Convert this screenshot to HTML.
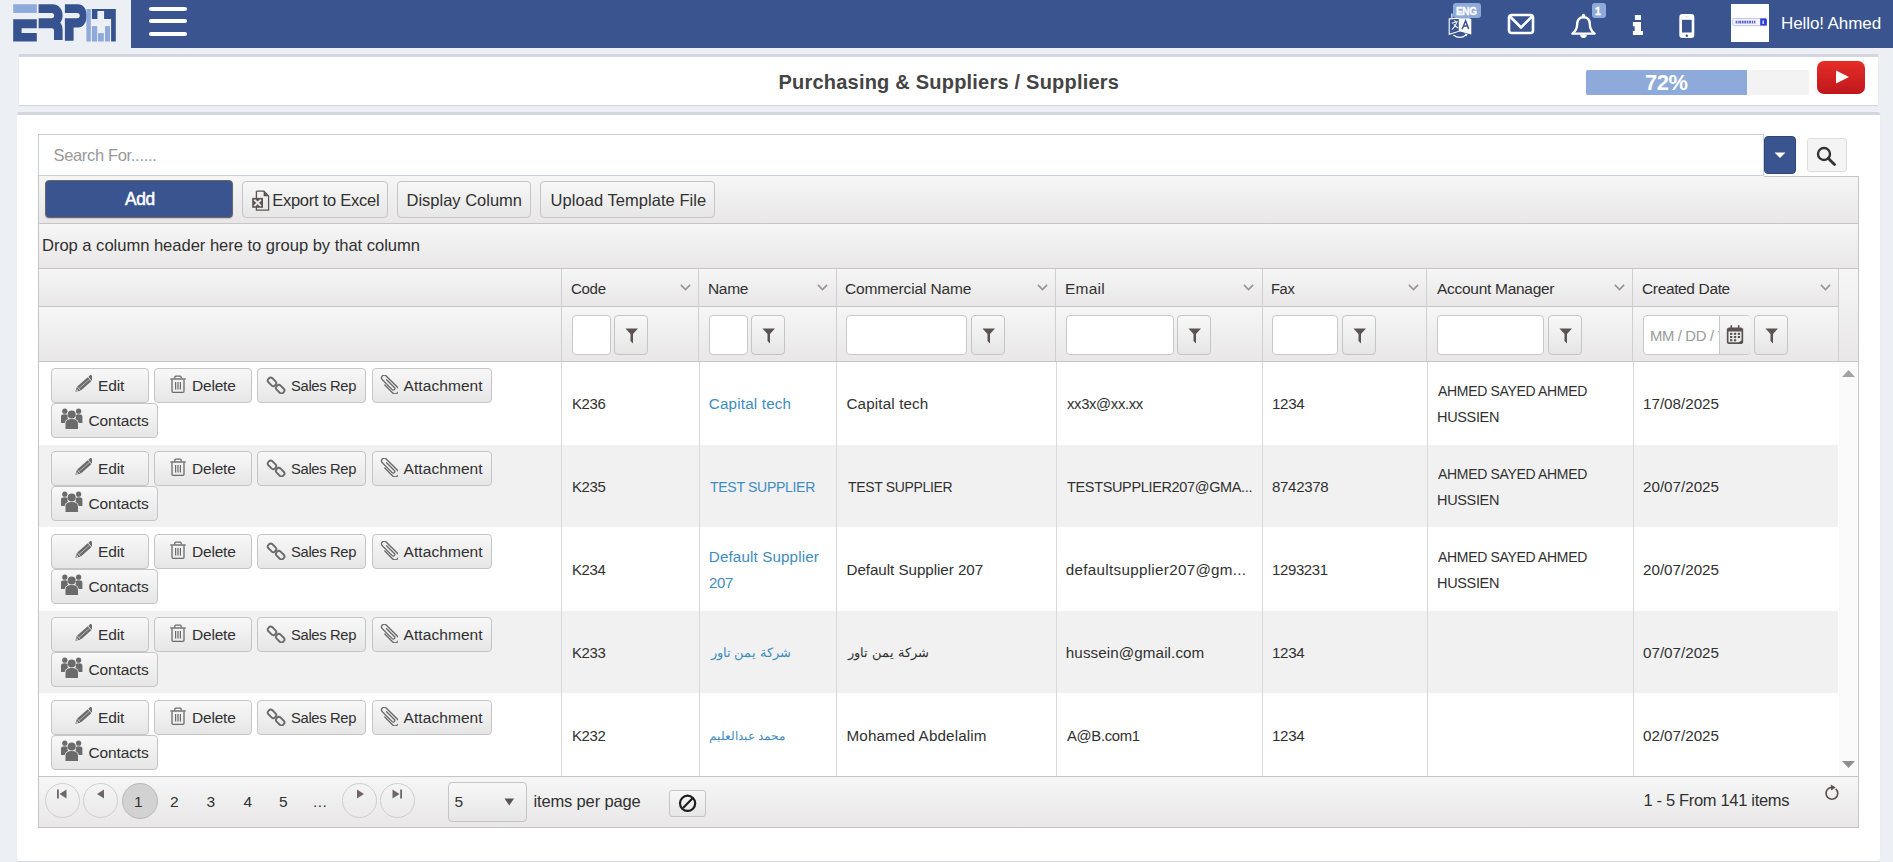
<!DOCTYPE html>
<html><head><meta charset="utf-8"><title>Suppliers</title>
<style>
html,body{margin:0;padding:0;width:1893px;height:862px;overflow:hidden;background:#ecf0f5}
body{position:relative;font-family:"Liberation Sans",sans-serif}
body>div{position:absolute}
.t{white-space:nowrap}
</style></head><body>
<div style="left:0px;top:0px;width:1893px;height:862px;background:#ecf0f5"></div>
<div style="left:131px;top:0px;width:1762px;height:48px;background:#39548f"></div>
<svg style="position:absolute;left:0px;top:0px" width="131" height="48" viewBox="0 0 131 48">
<rect x="13.2" y="4.2" width="23.6" height="8.7" fill="#8eaadb"/>
<path d="M13.2 19.2H36.8V28.2H21.6V33.1H36.8V41.5H13.2Z" fill="#36538f"/>
<path d="M38.6 4.2H52.5C58.5 4.2 62.6 9 62.6 15C62.6 18.8 61.5 21.5 60.2 22.8C61.8 24.5 62.6 27 62.6 30V40H54V30.5C54 29 53 28.2 51.5 28.2H38.6V18.3H51.5C53.2 18.3 54.2 17.2 54.2 15.6C54.2 14 53.2 12.9 51.5 12.9H38.6Z" fill="#36538f"/>
<path d="M64.9 4.2H78C83 4.2 86.7 8.5 86.7 15.8C86.7 23 83 27.5 78 27.5H73.6V40.7H64.9V18.3H77C78.8 18.3 79.8 17.2 79.8 15.6C79.8 14 78.8 12.9 77 12.9H64.9Z" fill="#36538f"/>
<rect x="86.4" y="9" width="4.4" height="32.5" fill="#8eaadb"/>
<path d="M91.9 9H115.8V41.5H111.1V18.9H104.1V11H97.4V18.9H91.9Z" fill="#36538f"/>
<rect x="91.9" y="26.1" width="5.3" height="15.4" fill="#8eaadb"/>
<rect x="98" y="33.1" width="5.8" height="8.4" fill="#8eaadb"/>
<rect x="105" y="26.1" width="5" height="15.4" fill="#8eaadb"/>
</svg>
<div style="left:149px;top:7px;width:38px;height:4px;background:#fff;border-radius:2px"></div>
<div style="left:149px;top:19px;width:38px;height:4px;background:#fff;border-radius:2px"></div>
<div style="left:149px;top:32px;width:38px;height:4px;background:#fff;border-radius:2px"></div>
<svg style="position:absolute;left:1444px;top:12px" width="32" height="28" viewBox="0 0 32 28">
<path d="M5.2 6.9 L15.3 6.3 V19.2 L5.2 22.2Z" fill="none" stroke="#ffffff" stroke-width="1.1"/>
<path d="M7.9 1.5 V6" stroke="#ffffff" stroke-width="1.2"/>
<path d="M15.3 6.2 H25.5 L27.3 7.3 V22.4 L15.3 19.2Z" fill="#ffffff"/>
<path d="M18.1 17.2 L21.6 8.7 L24.7 17.1 M19.5 13.9 H23.4" stroke="#39548f" stroke-width="1.5" fill="none"/>
<path d="M7.8 11.2 L13.6 9.6 M10.6 8.2 L11.6 10.2 M12.9 10.4 Q11.2 15 7.8 17.6 M9.9 12.4 Q12 14.8 14.2 16" stroke="#ffffff" stroke-width="1.05" fill="none"/>
<path d="M9.4 22.9 Q15.9 27.8 22 23" stroke="#ffffff" stroke-width="1.2" fill="none"/>
<path d="M20.6 21.6 L23.6 22.1 L22.3 24.6Z" fill="#ffffff"/>
</svg>
<div style="left:1453px;top:3px;width:28px;height:15px;background:#8eaadb;border-radius:3px"></div>
<div class="t" style="left:1456.06px;top:6.13px;font-size:10.6px;line-height:10.6px;color:#fff;font-weight:700;letter-spacing:-0.350px;transform:scaleX(0.9390);transform-origin:0 0;-webkit-text-stroke:0.35px #fff">ENG</div>
<svg style="position:absolute;left:1507px;top:13px" width="28" height="22" viewBox="0 0 28 22"><rect x="2" y="2" width="24" height="18" rx="2.5" fill="none" stroke="#ffffff" stroke-width="2.6"/><path d="M3 3.5 L14 14.5 L25 3.5" fill="none" stroke="#ffffff" stroke-width="2.6" stroke-linejoin="round"/></svg>
<svg style="position:absolute;left:1568px;top:10px" width="32" height="31" viewBox="0 0 32 31"><path d="M15.5 7.2 C19.5 7.2 21.8 10 21.8 14 C21.8 18 22.5 20.5 26.6 23.6 H4.4 C8.5 20.5 9.2 18 9.2 14 C9.2 10 11.5 7.2 15.5 7.2Z" fill="none" stroke="#ffffff" stroke-width="2.4" stroke-linejoin="round"/><circle cx="15.5" cy="5.4" r="1.7" fill="#ffffff"/><path d="M12.1 24.6 A3.4 3.4 0 0 0 18.9 24.6Z" fill="#ffffff"/></svg>
<div style="left:1592px;top:3px;width:14px;height:15px;background:#8eaadb;border-radius:3px"></div>
<div class="t" style="left:1595.00px;top:6.21px;font-size:10.5px;line-height:10.5px;color:#fff;font-weight:700;letter-spacing:0.000px;-webkit-text-stroke:0.35px #fff">1</div>
<svg style="position:absolute;left:1632px;top:14px" width="12" height="22" viewBox="0 0 12 22"><rect x="2.9" y="0.9" width="6.1" height="5" rx="0.6" fill="#ffffff"/><path d="M0.9 7.9 H9 V17 H11 V20.9 H0.9 V17 H2.7 V12.2 H0.9Z" fill="#ffffff"/></svg>
<svg style="position:absolute;left:1678px;top:13px" width="18" height="26" viewBox="0 0 18 26"><rect x="1.3" y="1.1" width="15" height="24" rx="3" fill="#ffffff"/><rect x="4" y="6.8" width="9.7" height="12.7" fill="#39548f"/><circle cx="8.8" cy="22.7" r="1.2" fill="#39548f"/><rect x="7" y="3.5" width="3.6" height="0.8" fill="#c9d2e6"/></svg>
<div style="left:1731px;top:4px;width:38px;height:38px;background:#fff"></div>
<svg style="position:absolute;left:1732px;top:17px" width="36" height="10" viewBox="0 0 36 10"><rect x="0.6" y="1.4" width="34" height="7.3" rx="1.6" fill="#f4f4ff" stroke="#b8c0ec" stroke-width="0.9"/><path d="M28.2 1.6 H33.5 Q34.8 1.6 34.8 3 V8.6 H28.2Z" fill="#2b3bd6"/><g fill="#5660cf"><rect x="3.6" y="3.7" width="1.3" height="2.8"/><rect x="5.6" y="3.7" width="1.1" height="2.8"/><rect x="7.3" y="3.7" width="1.8" height="2.8"/><rect x="9.8" y="3.7" width="1.8" height="2.8"/><rect x="12.3" y="3.7" width="1.8" height="2.8"/><rect x="14.8" y="3.7" width="1.6" height="2.8"/><rect x="17.2" y="3.7" width="1.8" height="2.8"/><rect x="19.8" y="3.7" width="1.4" height="2.8"/><rect x="22" y="3.7" width="1.3" height="2.8"/></g><rect x="30.4" y="3.4" width="1.6" height="3.6" fill="#c8d0f5"/></svg>
<div class="t" style="left:1781.00px;top:14.91px;font-size:17px;line-height:17px;color:#fff;font-weight:400;letter-spacing:-0.091px;">Hello! Ahmed</div>
<div style="left:19px;top:54px;width:1859px;height:48px;background:#fff;border-top:3px solid #d2d6de;box-shadow:0 1px 1px rgba(0,0,0,0.1)"></div>
<div class="t" style="left:778.50px;top:71.87px;font-size:20px;line-height:20px;color:#444;font-weight:700;letter-spacing:0.212px;">Purchasing &amp; Suppliers / Suppliers</div>
<div style="left:1586px;top:70px;width:223px;height:25px;background:#f3f3f3"></div>
<div style="left:1586px;top:70px;width:161px;height:25px;background:#8eaadb;border-radius:2px 0 0 2px"></div>
<div class="t" style="left:1645.01px;top:71.68px;font-size:22px;line-height:22px;color:#fff;font-weight:700;letter-spacing:-0.350px;transform:scaleX(0.9929);transform-origin:0 0;">72%</div>
<div style="left:1817px;top:61px;width:48px;height:33px;background:linear-gradient(#e52d27,#bf171d);border-radius:7px"></div>
<svg style="position:absolute;left:1835px;top:70px" width="15" height="15" viewBox="0 0 15 15"><path d="M1 0.5 L14 7 L1 13.5Z" fill="#fff"/></svg>
<div style="left:17px;top:112px;width:1863px;height:746px;background:#fff;border-top:3px solid #d2d6de;border-radius:3px;box-shadow:0 1px 1px rgba(0,0,0,0.1)"></div>
<div style="left:38px;top:134px;width:1726px;height:42px;background:#fff;border:1px solid #c9d1dc;box-sizing:border-box"></div>
<div class="t" style="left:53.50px;top:147.13px;font-size:16.5px;line-height:16.5px;color:#999;font-weight:400;letter-spacing:-0.333px;">Search For......</div>
<div style="left:1764px;top:136px;width:32px;height:38px;background:#39548f;border:1px solid #2f4675;border-radius:4px;box-sizing:border-box"></div>
<svg style="position:absolute;left:1774px;top:152px" width="12" height="7" viewBox="0 0 12 7"><path d="M0.5 0.5 H11.5 L6 6Z" fill="#fff"/></svg>
<div style="left:1807px;top:138px;width:40px;height:34px;background:#f4f4f4;border:1px solid #ddd;border-radius:3px;box-sizing:border-box"></div>
<svg style="position:absolute;left:1816px;top:146px" width="22" height="20" viewBox="0 0 22 20"><circle cx="8" cy="8" r="6" fill="none" stroke="#333" stroke-width="2.4"/><path d="M12.2 12.2 L18.5 18.5" stroke="#333" stroke-width="2.8" stroke-linecap="round"/></svg>
<div style="left:38px;top:176px;width:1821px;height:652px;background:#fff;border:1px solid #c5c5c5;border-top:none;box-sizing:border-box"></div>
<div style="left:39px;top:176px;width:1819px;height:47px;background:linear-gradient(#f6f6f6,#e9e7e7);border-bottom:1px solid #c5c5c5"></div>
<div style="left:1764px;top:176px;width:95px;height:1px;background:#c5c5c5"></div>
<div style="left:45px;top:180px;width:188px;height:38px;background:#39548f;border:1px solid #6a6764;border-radius:4px;box-sizing:border-box;box-shadow:0 1px 1px rgba(0,0,0,.15)"></div>
<div class="t" style="left:124.50px;top:191.29px;font-size:17.5px;line-height:17.5px;color:#fff;font-weight:400;letter-spacing:-0.350px;transform:scaleX(0.9898);transform-origin:0 0;-webkit-text-stroke:0.5px #fff">Add</div>
<div style="left:242px;top:181px;width:146px;height:37px;background:linear-gradient(#f8f8f8,#e6e6e6);border:1px solid #c5c5c5;border-radius:4px;box-sizing:border-box"></div>
<svg style="position:absolute;left:251px;top:190px" width="21" height="22" viewBox="0 0 21 22"><path d="M5.4 1.2 H12.9 L17.6 5.9 V20.2 H5.4 V15" fill="none" stroke="#5b5350" stroke-width="1.3"/><path d="M5.4 8 V1.2" stroke="#5b5350" stroke-width="1.3"/><path d="M12.6 1.2 L17.6 6.2 H12.6Z" fill="#5b5350"/><rect x="1.2" y="7.9" width="10.8" height="9.9" fill="#5b5350"/><path d="M3.3 9.8 L9.9 16 M9.9 9.8 L3.3 16" stroke="#e6e6e6" stroke-width="1.9"/></svg>
<div class="t" style="left:272.20px;top:191.63px;font-size:16.5px;line-height:16.5px;color:#313131;font-weight:400;letter-spacing:-0.250px;">Export to Excel</div>
<div style="left:397px;top:181px;width:134px;height:37px;background:linear-gradient(#f8f8f8,#e6e6e6);border:1px solid #c5c5c5;border-radius:4px;box-sizing:border-box"></div>
<div class="t" style="left:406.50px;top:191.63px;font-size:16.5px;line-height:16.5px;color:#313131;font-weight:400;letter-spacing:0.000px;">Display Column</div>
<div style="left:540px;top:181px;width:175px;height:37px;background:linear-gradient(#f8f8f8,#e6e6e6);border:1px solid #c5c5c5;border-radius:4px;box-sizing:border-box"></div>
<div class="t" style="left:550.50px;top:191.63px;font-size:16.5px;line-height:16.5px;color:#313131;font-weight:400;letter-spacing:0.053px;">Upload Template File</div>
<div style="left:39px;top:224px;width:1819px;height:44px;background:linear-gradient(#f6f6f6,#e9e7e7);border-bottom:1px solid #c5c5c5"></div>
<div class="t" style="left:42.00px;top:238.25px;font-size:16.6px;line-height:16.6px;color:#313131;font-weight:400;letter-spacing:-0.042px;">Drop a column header here to group by that column</div>
<div style="left:39px;top:269px;width:1819px;height:37px;background:linear-gradient(#f6f6f6,#e9e7e7);border-bottom:1px solid #c5c5c5"></div>
<div style="left:39px;top:307px;width:1819px;height:54px;background:linear-gradient(#f6f6f6,#e9e7e7);border-bottom:1px solid #c5c5c5"></div>
<div style="left:561px;top:269px;width:1px;height:92px;background:#cfcfcf"></div>
<div style="left:698px;top:269px;width:1px;height:92px;background:#cfcfcf"></div>
<div style="left:836px;top:269px;width:1px;height:92px;background:#cfcfcf"></div>
<div style="left:1055px;top:269px;width:1px;height:92px;background:#cfcfcf"></div>
<div style="left:1262px;top:269px;width:1px;height:92px;background:#cfcfcf"></div>
<div style="left:1426px;top:269px;width:1px;height:92px;background:#cfcfcf"></div>
<div style="left:1632px;top:269px;width:1px;height:92px;background:#cfcfcf"></div>
<div style="left:1838px;top:269px;width:1px;height:92px;background:#cfcfcf"></div>
<div style="left:1839px;top:269px;width:19px;height:93px;background:linear-gradient(#f6f6f6,#e9e7e7);border-bottom:1px solid #c5c5c5;box-sizing:border-box"></div>
<div class="t" style="left:571.03px;top:281.18px;font-size:15.5px;line-height:15.5px;color:#313131;font-weight:400;letter-spacing:-0.350px;transform:scaleX(0.9728);transform-origin:0 0;">Code</div>
<svg style="position:absolute;left:680px;top:284px" width="11" height="7" viewBox="0 0 11 7"><path d="M0.9 0.9 L5.5 5.5 L10.1 0.9" fill="none" stroke="#9a9391" stroke-width="1.6"/></svg>
<div class="t" style="left:708.00px;top:281.18px;font-size:15.5px;line-height:15.5px;color:#313131;font-weight:400;letter-spacing:-0.333px;">Name</div>
<svg style="position:absolute;left:817px;top:284px" width="11" height="7" viewBox="0 0 11 7"><path d="M0.9 0.9 L5.5 5.5 L10.1 0.9" fill="none" stroke="#9a9391" stroke-width="1.6"/></svg>
<div class="t" style="left:845.00px;top:281.18px;font-size:15.5px;line-height:15.5px;color:#313131;font-weight:400;letter-spacing:-0.143px;">Commercial Name</div>
<svg style="position:absolute;left:1037px;top:284px" width="11" height="7" viewBox="0 0 11 7"><path d="M0.9 0.9 L5.5 5.5 L10.1 0.9" fill="none" stroke="#9a9391" stroke-width="1.6"/></svg>
<div class="t" style="left:1065.00px;top:281.18px;font-size:15.5px;line-height:15.5px;color:#313131;font-weight:400;letter-spacing:0.250px;">Email</div>
<svg style="position:absolute;left:1243px;top:284px" width="11" height="7" viewBox="0 0 11 7"><path d="M0.9 0.9 L5.5 5.5 L10.1 0.9" fill="none" stroke="#9a9391" stroke-width="1.6"/></svg>
<div class="t" style="left:1271.06px;top:281.18px;font-size:15.5px;line-height:15.5px;color:#313131;font-weight:400;letter-spacing:-0.350px;transform:scaleX(0.9442);transform-origin:0 0;">Fax</div>
<svg style="position:absolute;left:1408px;top:284px" width="11" height="7" viewBox="0 0 11 7"><path d="M0.9 0.9 L5.5 5.5 L10.1 0.9" fill="none" stroke="#9a9391" stroke-width="1.6"/></svg>
<div class="t" style="left:1437.00px;top:281.18px;font-size:15.5px;line-height:15.5px;color:#313131;font-weight:400;letter-spacing:-0.286px;">Account Manager</div>
<svg style="position:absolute;left:1614px;top:284px" width="11" height="7" viewBox="0 0 11 7"><path d="M0.9 0.9 L5.5 5.5 L10.1 0.9" fill="none" stroke="#9a9391" stroke-width="1.6"/></svg>
<div class="t" style="left:1642.00px;top:281.18px;font-size:15.5px;line-height:15.5px;color:#313131;font-weight:400;letter-spacing:-0.350px;transform:scaleX(0.9983);transform-origin:0 0;">Created Date</div>
<svg style="position:absolute;left:1820px;top:284px" width="11" height="7" viewBox="0 0 11 7"><path d="M0.9 0.9 L5.5 5.5 L10.1 0.9" fill="none" stroke="#9a9391" stroke-width="1.6"/></svg>
<div style="left:572px;top:315px;width:39px;height:40px;background:#fff;border:1px solid #c9c9c9;border-radius:4px;box-sizing:border-box"></div>
<div style="left:614px;top:315px;width:34px;height:40px;background:linear-gradient(#f8f8f8,#e6e6e6);border:1px solid #c5c5c5;border-radius:4px;box-sizing:border-box"></div>
<svg style="position:absolute;left:625px;top:328px" width="14" height="16" viewBox="0 0 14 16"><path d="M0.5 0.5 H13 L8 6 V15.5 L5.5 13 V6Z" fill="#5b5350"/></svg>
<div style="left:709px;top:315px;width:39px;height:40px;background:#fff;border:1px solid #c9c9c9;border-radius:4px;box-sizing:border-box"></div>
<div style="left:751px;top:315px;width:34px;height:40px;background:linear-gradient(#f8f8f8,#e6e6e6);border:1px solid #c5c5c5;border-radius:4px;box-sizing:border-box"></div>
<svg style="position:absolute;left:762px;top:328px" width="14" height="16" viewBox="0 0 14 16"><path d="M0.5 0.5 H13 L8 6 V15.5 L5.5 13 V6Z" fill="#5b5350"/></svg>
<div style="left:846px;top:315px;width:121px;height:40px;background:#fff;border:1px solid #c9c9c9;border-radius:4px;box-sizing:border-box"></div>
<div style="left:971px;top:315px;width:34px;height:40px;background:linear-gradient(#f8f8f8,#e6e6e6);border:1px solid #c5c5c5;border-radius:4px;box-sizing:border-box"></div>
<svg style="position:absolute;left:982px;top:328px" width="14" height="16" viewBox="0 0 14 16"><path d="M0.5 0.5 H13 L8 6 V15.5 L5.5 13 V6Z" fill="#5b5350"/></svg>
<div style="left:1066px;top:315px;width:108px;height:40px;background:#fff;border:1px solid #c9c9c9;border-radius:4px;box-sizing:border-box"></div>
<div style="left:1177px;top:315px;width:34px;height:40px;background:linear-gradient(#f8f8f8,#e6e6e6);border:1px solid #c5c5c5;border-radius:4px;box-sizing:border-box"></div>
<svg style="position:absolute;left:1188px;top:328px" width="14" height="16" viewBox="0 0 14 16"><path d="M0.5 0.5 H13 L8 6 V15.5 L5.5 13 V6Z" fill="#5b5350"/></svg>
<div style="left:1272px;top:315px;width:66px;height:40px;background:#fff;border:1px solid #c9c9c9;border-radius:4px;box-sizing:border-box"></div>
<div style="left:1342px;top:315px;width:34px;height:40px;background:linear-gradient(#f8f8f8,#e6e6e6);border:1px solid #c5c5c5;border-radius:4px;box-sizing:border-box"></div>
<svg style="position:absolute;left:1353px;top:328px" width="14" height="16" viewBox="0 0 14 16"><path d="M0.5 0.5 H13 L8 6 V15.5 L5.5 13 V6Z" fill="#5b5350"/></svg>
<div style="left:1437px;top:315px;width:107px;height:40px;background:#fff;border:1px solid #c9c9c9;border-radius:4px;box-sizing:border-box"></div>
<div style="left:1548px;top:315px;width:34px;height:40px;background:linear-gradient(#f8f8f8,#e6e6e6);border:1px solid #c5c5c5;border-radius:4px;box-sizing:border-box"></div>
<svg style="position:absolute;left:1559px;top:328px" width="14" height="16" viewBox="0 0 14 16"><path d="M0.5 0.5 H13 L8 6 V15.5 L5.5 13 V6Z" fill="#5b5350"/></svg>
<div style="left:1643px;top:315px;width:108px;height:40px;background:#fff;border:1px solid #c9c9c9;border-radius:4px;box-sizing:border-box"></div>
<div class="t" style="left:1649.74px;top:328.18px;font-size:15.5px;line-height:15.5px;color:#9a9a9a;font-weight:400;letter-spacing:-0.350px;transform:scaleX(0.9560);transform-origin:0 0;max-width:72px;overflow:hidden;height:20px">MM / DD / Y</div>
<div style="left:1719px;top:316px;width:31px;height:38px;background:linear-gradient(#f8f8f8,#e6e6e6);border-left:1px solid #c9c9c9;border-radius:0 4px 4px 0"></div>
<svg style="position:absolute;left:1726px;top:325px" width="18" height="20" viewBox="0 0 18 20"><rect x="0.8" y="2.4" width="16.4" height="16.6" rx="2.6" fill="#5b5350"/><path d="M2.5 6.6 H15.5 V15.2 L12.8 17.3 H3.2 Q2.5 17.3 2.5 16.6Z" fill="#eeeeee"/><g fill="#5b5350"><rect x="4" y="7.8" width="2.3" height="2.1"/><rect x="7.9" y="7.8" width="2.3" height="2.1"/><rect x="11.8" y="7.8" width="2.3" height="2.1"/><rect x="4" y="11" width="2.3" height="2.1"/><rect x="7.9" y="11" width="2.3" height="2.1"/><rect x="11.8" y="11" width="2.3" height="2.1"/><rect x="4" y="14.2" width="2.3" height="2.1"/><rect x="7.9" y="14.2" width="2.3" height="2.1"/></g><rect x="4.5" y="0.2" width="1.6" height="3.8" fill="#5b5350"/><rect x="11.9" y="0.2" width="1.6" height="3.8" fill="#5b5350"/></svg>
<div style="left:1754px;top:315px;width:34px;height:40px;background:linear-gradient(#f8f8f8,#e6e6e6);border:1px solid #c5c5c5;border-radius:4px;box-sizing:border-box"></div>
<svg style="position:absolute;left:1765px;top:328px" width="14" height="16" viewBox="0 0 14 16"><path d="M0.5 0.5 H13 L8 6 V15.5 L5.5 13 V6Z" fill="#5b5350"/></svg>
<div style="left:561px;top:362px;width:1px;height:83px;background:#d9d9d9"></div>
<div style="left:699px;top:362px;width:1px;height:83px;background:#d9d9d9"></div>
<div style="left:836px;top:362px;width:1px;height:83px;background:#d9d9d9"></div>
<div style="left:1056px;top:362px;width:1px;height:83px;background:#d9d9d9"></div>
<div style="left:1262px;top:362px;width:1px;height:83px;background:#d9d9d9"></div>
<div style="left:1427px;top:362px;width:1px;height:83px;background:#d9d9d9"></div>
<div style="left:1633px;top:362px;width:1px;height:83px;background:#d9d9d9"></div>
<div style="left:51px;top:368px;width:98px;height:35px;background:linear-gradient(#f8f8f8,#e6e6e6);border:1px solid #c5c5c5;border-radius:4px;box-sizing:border-box"></div>
<svg style="position:absolute;left:74px;top:375px" width="18" height="18" viewBox="0 0 18 18"><g transform="translate(1.3,16.8) rotate(-41.5)"><path d="M0 0 L4.5 -2.7 V2.7Z" fill="#6b6b6b"/><rect x="5" y="-2.7" width="14" height="5.4" fill="#6b6b6b"/><rect x="19.6" y="-2.7" width="3.4" height="5.4" rx="1" fill="#6b6b6b"/><path d="M5 0 H19" stroke="#cfcfcf" stroke-width="0.7"/><path d="M1.2 0 L3 -1 V1Z" fill="#eee"/></g></svg>
<div class="t" style="left:98.00px;top:378.18px;font-size:15.5px;line-height:15.5px;color:#313131;font-weight:400;letter-spacing:-0.100px;">Edit</div>
<div style="left:154px;top:368px;width:98px;height:35px;background:linear-gradient(#f8f8f8,#e6e6e6);border:1px solid #c5c5c5;border-radius:4px;box-sizing:border-box"></div>
<svg style="position:absolute;left:170px;top:375px" width="16" height="18" viewBox="0 0 16 18"><path d="M0.3 4 H15.7" stroke="#6b6b6b" stroke-width="1.4"/><path d="M4.8 3.6 V2.2 Q4.8 1.2 5.8 1.2 H10.2 Q11.2 1.2 11.2 2.2 V3.6" fill="none" stroke="#6b6b6b" stroke-width="1.3"/><path d="M2 4.5 V16.2 Q2 17.3 3.1 17.3 H12.9 Q14 17.3 14 16.2 V4.5" fill="none" stroke="#6b6b6b" stroke-width="1.3"/><path d="M5.6 7 V14.5 M8 7 V14.5 M10.4 7 V14.5" stroke="#6b6b6b" stroke-width="1.2"/></svg>
<div class="t" style="left:192.00px;top:378.18px;font-size:15.5px;line-height:15.5px;color:#313131;font-weight:400;letter-spacing:-0.200px;">Delete</div>
<div style="left:257px;top:368px;width:109px;height:35px;background:linear-gradient(#f8f8f8,#e6e6e6);border:1px solid #c5c5c5;border-radius:4px;box-sizing:border-box"></div>
<svg style="position:absolute;left:266px;top:373px" width="20" height="21" viewBox="0 0 20 21"><g fill="none" stroke="#6b6b6b" stroke-width="1.9"><rect x="3.2" y="4.2" width="5.6" height="9.2" rx="2.4" transform="rotate(-45 6 8.8)"/><rect x="11.4" y="11.6" width="5.6" height="9.2" rx="2.4" transform="rotate(-45 14.2 16.2)"/></g></svg>
<div class="t" style="left:291.05px;top:378.18px;font-size:15.5px;line-height:15.5px;color:#313131;font-weight:400;letter-spacing:-0.350px;transform:scaleX(0.9524);transform-origin:0 0;">Sales Rep</div>
<div style="left:372px;top:368px;width:120px;height:35px;background:linear-gradient(#f8f8f8,#e6e6e6);border:1px solid #c5c5c5;border-radius:4px;box-sizing:border-box"></div>
<svg style="position:absolute;left:380px;top:375px" width="18" height="19" viewBox="0 0 18 19"><g transform="translate(9.2,9.2) rotate(-45)"><path d="M1.3 -5 V6 A1.5 1.5 0 0 1 -1.7 6 V-8 A2.7 2.7 0 0 1 3.7 -8 V8.3 A3.7 3.7 0 0 1 -3.7 8.3 V-2.5" fill="none" stroke="#6b6b6b" stroke-width="1.35" stroke-linecap="round"/></g></svg>
<div class="t" style="left:403.60px;top:378.18px;font-size:15.5px;line-height:15.5px;color:#313131;font-weight:400;letter-spacing:0.067px;">Attachment</div>
<div style="left:51px;top:403px;width:107px;height:35px;background:linear-gradient(#f8f8f8,#e6e6e6);border:1px solid #c5c5c5;border-radius:4px;box-sizing:border-box"></div>
<svg style="position:absolute;left:61px;top:408px" width="22" height="22" viewBox="0 0 22 22"><g fill="#6b6b6b"><circle cx="10.7" cy="6.5" r="4"/><path d="M4.5 21 V15.5 Q4.5 11 10.7 11 Q17 11 17 15.5 V21Z"/><circle cx="3.8" cy="3.2" r="2.6"/><circle cx="17.6" cy="3.2" r="2.6"/><path d="M0 11.5 V8.5 Q0 6.3 3.8 6.3 Q5.8 6.3 6.8 7.6 Q6 9.5 7 11 Q4 12 3.6 15 H0Z"/><path d="M21.4 11.5 V8.5 Q21.4 6.3 17.6 6.3 Q15.6 6.3 14.6 7.6 Q15.4 9.5 14.4 11 Q17.4 12 17.8 15 H21.4Z"/></g></svg>
<div class="t" style="left:88.50px;top:413.18px;font-size:15.5px;line-height:15.5px;color:#313131;font-weight:400;letter-spacing:-0.143px;">Contacts</div>
<div class="t" style="left:571.52px;top:396.43px;font-size:15.2px;line-height:15.2px;color:#313131;font-weight:400;letter-spacing:-0.350px;transform:scaleX(0.9833);transform-origin:0 0;">K236</div>
<div class="t" style="left:708.80px;top:396.43px;font-size:15.2px;line-height:15.2px;color:#3f8cc0;font-weight:400;letter-spacing:0.182px;">Capital tech</div>
<div class="t" style="left:846.50px;top:396.43px;font-size:15.2px;line-height:15.2px;color:#313131;font-weight:400;letter-spacing:0.145px;">Capital tech</div>
<div class="t" style="left:1066.80px;top:396.43px;font-size:15.2px;line-height:15.2px;color:#313131;font-weight:400;letter-spacing:-0.350px;transform:scaleX(0.9762);transform-origin:0 0;">xx3x@xx.xx</div>
<div class="t" style="left:1272.00px;top:396.43px;font-size:15.2px;line-height:15.2px;color:#313131;font-weight:400;letter-spacing:-0.333px;">1234</div>
<div class="t" style="left:1438.00px;top:382.93px;font-size:15.2px;line-height:15.2px;color:#313131;font-weight:400;letter-spacing:-0.350px;transform:scaleX(0.9213);transform-origin:0 0;">AHMED SAYED AHMED</div>
<div class="t" style="left:1437.05px;top:409.43px;font-size:15.2px;line-height:15.2px;color:#313131;font-weight:400;letter-spacing:-0.350px;transform:scaleX(0.9539);transform-origin:0 0;">HUSSIEN</div>
<div class="t" style="left:1643.00px;top:396.43px;font-size:15.2px;line-height:15.2px;color:#313131;font-weight:400;letter-spacing:0.000px;">17/08/2025</div>
<div style="left:39px;top:445px;width:1799px;height:82px;background:#f1f1f1"></div>
<div style="left:561px;top:445px;width:1px;height:83px;background:#d9d9d9"></div>
<div style="left:699px;top:445px;width:1px;height:83px;background:#d9d9d9"></div>
<div style="left:836px;top:445px;width:1px;height:83px;background:#d9d9d9"></div>
<div style="left:1056px;top:445px;width:1px;height:83px;background:#d9d9d9"></div>
<div style="left:1262px;top:445px;width:1px;height:83px;background:#d9d9d9"></div>
<div style="left:1427px;top:445px;width:1px;height:83px;background:#d9d9d9"></div>
<div style="left:1633px;top:445px;width:1px;height:83px;background:#d9d9d9"></div>
<div style="left:51px;top:451px;width:98px;height:35px;background:linear-gradient(#f8f8f8,#e6e6e6);border:1px solid #c5c5c5;border-radius:4px;box-sizing:border-box"></div>
<svg style="position:absolute;left:74px;top:458px" width="18" height="18" viewBox="0 0 18 18"><g transform="translate(1.3,16.8) rotate(-41.5)"><path d="M0 0 L4.5 -2.7 V2.7Z" fill="#6b6b6b"/><rect x="5" y="-2.7" width="14" height="5.4" fill="#6b6b6b"/><rect x="19.6" y="-2.7" width="3.4" height="5.4" rx="1" fill="#6b6b6b"/><path d="M5 0 H19" stroke="#cfcfcf" stroke-width="0.7"/><path d="M1.2 0 L3 -1 V1Z" fill="#eee"/></g></svg>
<div class="t" style="left:98.00px;top:461.18px;font-size:15.5px;line-height:15.5px;color:#313131;font-weight:400;letter-spacing:-0.100px;">Edit</div>
<div style="left:154px;top:451px;width:98px;height:35px;background:linear-gradient(#f8f8f8,#e6e6e6);border:1px solid #c5c5c5;border-radius:4px;box-sizing:border-box"></div>
<svg style="position:absolute;left:170px;top:458px" width="16" height="18" viewBox="0 0 16 18"><path d="M0.3 4 H15.7" stroke="#6b6b6b" stroke-width="1.4"/><path d="M4.8 3.6 V2.2 Q4.8 1.2 5.8 1.2 H10.2 Q11.2 1.2 11.2 2.2 V3.6" fill="none" stroke="#6b6b6b" stroke-width="1.3"/><path d="M2 4.5 V16.2 Q2 17.3 3.1 17.3 H12.9 Q14 17.3 14 16.2 V4.5" fill="none" stroke="#6b6b6b" stroke-width="1.3"/><path d="M5.6 7 V14.5 M8 7 V14.5 M10.4 7 V14.5" stroke="#6b6b6b" stroke-width="1.2"/></svg>
<div class="t" style="left:192.00px;top:461.18px;font-size:15.5px;line-height:15.5px;color:#313131;font-weight:400;letter-spacing:-0.200px;">Delete</div>
<div style="left:257px;top:451px;width:109px;height:35px;background:linear-gradient(#f8f8f8,#e6e6e6);border:1px solid #c5c5c5;border-radius:4px;box-sizing:border-box"></div>
<svg style="position:absolute;left:266px;top:456px" width="20" height="21" viewBox="0 0 20 21"><g fill="none" stroke="#6b6b6b" stroke-width="1.9"><rect x="3.2" y="4.2" width="5.6" height="9.2" rx="2.4" transform="rotate(-45 6 8.8)"/><rect x="11.4" y="11.6" width="5.6" height="9.2" rx="2.4" transform="rotate(-45 14.2 16.2)"/></g></svg>
<div class="t" style="left:291.05px;top:461.18px;font-size:15.5px;line-height:15.5px;color:#313131;font-weight:400;letter-spacing:-0.350px;transform:scaleX(0.9524);transform-origin:0 0;">Sales Rep</div>
<div style="left:372px;top:451px;width:120px;height:35px;background:linear-gradient(#f8f8f8,#e6e6e6);border:1px solid #c5c5c5;border-radius:4px;box-sizing:border-box"></div>
<svg style="position:absolute;left:380px;top:458px" width="18" height="19" viewBox="0 0 18 19"><g transform="translate(9.2,9.2) rotate(-45)"><path d="M1.3 -5 V6 A1.5 1.5 0 0 1 -1.7 6 V-8 A2.7 2.7 0 0 1 3.7 -8 V8.3 A3.7 3.7 0 0 1 -3.7 8.3 V-2.5" fill="none" stroke="#6b6b6b" stroke-width="1.35" stroke-linecap="round"/></g></svg>
<div class="t" style="left:403.60px;top:461.18px;font-size:15.5px;line-height:15.5px;color:#313131;font-weight:400;letter-spacing:0.067px;">Attachment</div>
<div style="left:51px;top:486px;width:107px;height:35px;background:linear-gradient(#f8f8f8,#e6e6e6);border:1px solid #c5c5c5;border-radius:4px;box-sizing:border-box"></div>
<svg style="position:absolute;left:61px;top:491px" width="22" height="22" viewBox="0 0 22 22"><g fill="#6b6b6b"><circle cx="10.7" cy="6.5" r="4"/><path d="M4.5 21 V15.5 Q4.5 11 10.7 11 Q17 11 17 15.5 V21Z"/><circle cx="3.8" cy="3.2" r="2.6"/><circle cx="17.6" cy="3.2" r="2.6"/><path d="M0 11.5 V8.5 Q0 6.3 3.8 6.3 Q5.8 6.3 6.8 7.6 Q6 9.5 7 11 Q4 12 3.6 15 H0Z"/><path d="M21.4 11.5 V8.5 Q21.4 6.3 17.6 6.3 Q15.6 6.3 14.6 7.6 Q15.4 9.5 14.4 11 Q17.4 12 17.8 15 H21.4Z"/></g></svg>
<div class="t" style="left:88.50px;top:496.18px;font-size:15.5px;line-height:15.5px;color:#313131;font-weight:400;letter-spacing:-0.143px;">Contacts</div>
<div class="t" style="left:571.52px;top:479.43px;font-size:15.2px;line-height:15.2px;color:#313131;font-weight:400;letter-spacing:-0.350px;transform:scaleX(0.9833);transform-origin:0 0;">K235</div>
<div class="t" style="left:709.80px;top:479.43px;font-size:15.2px;line-height:15.2px;color:#3f8cc0;font-weight:400;letter-spacing:-0.350px;transform:scaleX(0.9264);transform-origin:0 0;">TEST SUPPLIER</div>
<div class="t" style="left:847.50px;top:479.43px;font-size:15.2px;line-height:15.2px;color:#313131;font-weight:400;letter-spacing:-0.350px;transform:scaleX(0.9193);transform-origin:0 0;">TEST SUPPLIER</div>
<div class="t" style="left:1066.80px;top:479.43px;font-size:15.2px;line-height:15.2px;color:#313131;font-weight:400;letter-spacing:-0.350px;transform:scaleX(0.9533);transform-origin:0 0;">TESTSUPPLIER207@GMA...</div>
<div class="t" style="left:1272.01px;top:479.43px;font-size:15.2px;line-height:15.2px;color:#313131;font-weight:400;letter-spacing:-0.350px;transform:scaleX(0.9946);transform-origin:0 0;">8742378</div>
<div class="t" style="left:1438.00px;top:465.93px;font-size:15.2px;line-height:15.2px;color:#313131;font-weight:400;letter-spacing:-0.350px;transform:scaleX(0.9213);transform-origin:0 0;">AHMED SAYED AHMED</div>
<div class="t" style="left:1437.05px;top:492.43px;font-size:15.2px;line-height:15.2px;color:#313131;font-weight:400;letter-spacing:-0.350px;transform:scaleX(0.9539);transform-origin:0 0;">HUSSIEN</div>
<div class="t" style="left:1643.00px;top:479.43px;font-size:15.2px;line-height:15.2px;color:#313131;font-weight:400;letter-spacing:0.000px;">20/07/2025</div>
<div style="left:561px;top:528px;width:1px;height:83px;background:#d9d9d9"></div>
<div style="left:699px;top:528px;width:1px;height:83px;background:#d9d9d9"></div>
<div style="left:836px;top:528px;width:1px;height:83px;background:#d9d9d9"></div>
<div style="left:1056px;top:528px;width:1px;height:83px;background:#d9d9d9"></div>
<div style="left:1262px;top:528px;width:1px;height:83px;background:#d9d9d9"></div>
<div style="left:1427px;top:528px;width:1px;height:83px;background:#d9d9d9"></div>
<div style="left:1633px;top:528px;width:1px;height:83px;background:#d9d9d9"></div>
<div style="left:51px;top:534px;width:98px;height:35px;background:linear-gradient(#f8f8f8,#e6e6e6);border:1px solid #c5c5c5;border-radius:4px;box-sizing:border-box"></div>
<svg style="position:absolute;left:74px;top:541px" width="18" height="18" viewBox="0 0 18 18"><g transform="translate(1.3,16.8) rotate(-41.5)"><path d="M0 0 L4.5 -2.7 V2.7Z" fill="#6b6b6b"/><rect x="5" y="-2.7" width="14" height="5.4" fill="#6b6b6b"/><rect x="19.6" y="-2.7" width="3.4" height="5.4" rx="1" fill="#6b6b6b"/><path d="M5 0 H19" stroke="#cfcfcf" stroke-width="0.7"/><path d="M1.2 0 L3 -1 V1Z" fill="#eee"/></g></svg>
<div class="t" style="left:98.00px;top:544.18px;font-size:15.5px;line-height:15.5px;color:#313131;font-weight:400;letter-spacing:-0.100px;">Edit</div>
<div style="left:154px;top:534px;width:98px;height:35px;background:linear-gradient(#f8f8f8,#e6e6e6);border:1px solid #c5c5c5;border-radius:4px;box-sizing:border-box"></div>
<svg style="position:absolute;left:170px;top:541px" width="16" height="18" viewBox="0 0 16 18"><path d="M0.3 4 H15.7" stroke="#6b6b6b" stroke-width="1.4"/><path d="M4.8 3.6 V2.2 Q4.8 1.2 5.8 1.2 H10.2 Q11.2 1.2 11.2 2.2 V3.6" fill="none" stroke="#6b6b6b" stroke-width="1.3"/><path d="M2 4.5 V16.2 Q2 17.3 3.1 17.3 H12.9 Q14 17.3 14 16.2 V4.5" fill="none" stroke="#6b6b6b" stroke-width="1.3"/><path d="M5.6 7 V14.5 M8 7 V14.5 M10.4 7 V14.5" stroke="#6b6b6b" stroke-width="1.2"/></svg>
<div class="t" style="left:192.00px;top:544.18px;font-size:15.5px;line-height:15.5px;color:#313131;font-weight:400;letter-spacing:-0.200px;">Delete</div>
<div style="left:257px;top:534px;width:109px;height:35px;background:linear-gradient(#f8f8f8,#e6e6e6);border:1px solid #c5c5c5;border-radius:4px;box-sizing:border-box"></div>
<svg style="position:absolute;left:266px;top:539px" width="20" height="21" viewBox="0 0 20 21"><g fill="none" stroke="#6b6b6b" stroke-width="1.9"><rect x="3.2" y="4.2" width="5.6" height="9.2" rx="2.4" transform="rotate(-45 6 8.8)"/><rect x="11.4" y="11.6" width="5.6" height="9.2" rx="2.4" transform="rotate(-45 14.2 16.2)"/></g></svg>
<div class="t" style="left:291.05px;top:544.18px;font-size:15.5px;line-height:15.5px;color:#313131;font-weight:400;letter-spacing:-0.350px;transform:scaleX(0.9524);transform-origin:0 0;">Sales Rep</div>
<div style="left:372px;top:534px;width:120px;height:35px;background:linear-gradient(#f8f8f8,#e6e6e6);border:1px solid #c5c5c5;border-radius:4px;box-sizing:border-box"></div>
<svg style="position:absolute;left:380px;top:541px" width="18" height="19" viewBox="0 0 18 19"><g transform="translate(9.2,9.2) rotate(-45)"><path d="M1.3 -5 V6 A1.5 1.5 0 0 1 -1.7 6 V-8 A2.7 2.7 0 0 1 3.7 -8 V8.3 A3.7 3.7 0 0 1 -3.7 8.3 V-2.5" fill="none" stroke="#6b6b6b" stroke-width="1.35" stroke-linecap="round"/></g></svg>
<div class="t" style="left:403.60px;top:544.18px;font-size:15.5px;line-height:15.5px;color:#313131;font-weight:400;letter-spacing:0.067px;">Attachment</div>
<div style="left:51px;top:569px;width:107px;height:35px;background:linear-gradient(#f8f8f8,#e6e6e6);border:1px solid #c5c5c5;border-radius:4px;box-sizing:border-box"></div>
<svg style="position:absolute;left:61px;top:574px" width="22" height="22" viewBox="0 0 22 22"><g fill="#6b6b6b"><circle cx="10.7" cy="6.5" r="4"/><path d="M4.5 21 V15.5 Q4.5 11 10.7 11 Q17 11 17 15.5 V21Z"/><circle cx="3.8" cy="3.2" r="2.6"/><circle cx="17.6" cy="3.2" r="2.6"/><path d="M0 11.5 V8.5 Q0 6.3 3.8 6.3 Q5.8 6.3 6.8 7.6 Q6 9.5 7 11 Q4 12 3.6 15 H0Z"/><path d="M21.4 11.5 V8.5 Q21.4 6.3 17.6 6.3 Q15.6 6.3 14.6 7.6 Q15.4 9.5 14.4 11 Q17.4 12 17.8 15 H21.4Z"/></g></svg>
<div class="t" style="left:88.50px;top:579.18px;font-size:15.5px;line-height:15.5px;color:#313131;font-weight:400;letter-spacing:-0.143px;">Contacts</div>
<div class="t" style="left:571.52px;top:562.43px;font-size:15.2px;line-height:15.2px;color:#313131;font-weight:400;letter-spacing:-0.350px;transform:scaleX(0.9833);transform-origin:0 0;">K234</div>
<div class="t" style="left:708.80px;top:549.43px;font-size:15.2px;line-height:15.2px;color:#3f8cc0;font-weight:400;letter-spacing:0.133px;">Default Supplier</div>
<div class="t" style="left:708.81px;top:574.93px;font-size:15.2px;line-height:15.2px;color:#3f8cc0;font-weight:400;letter-spacing:-0.350px;transform:scaleX(0.9871);transform-origin:0 0;">207</div>
<div class="t" style="left:846.50px;top:562.43px;font-size:15.2px;line-height:15.2px;color:#313131;font-weight:400;letter-spacing:-0.053px;">Default Supplier 207</div>
<div class="t" style="left:1065.80px;top:562.43px;font-size:15.2px;line-height:15.2px;color:#313131;font-weight:400;letter-spacing:0.304px;">defaultsupplier207@gm...</div>
<div class="t" style="left:1272.02px;top:562.43px;font-size:15.2px;line-height:15.2px;color:#313131;font-weight:400;letter-spacing:-0.350px;transform:scaleX(0.9839);transform-origin:0 0;">1293231</div>
<div class="t" style="left:1438.00px;top:548.93px;font-size:15.2px;line-height:15.2px;color:#313131;font-weight:400;letter-spacing:-0.350px;transform:scaleX(0.9213);transform-origin:0 0;">AHMED SAYED AHMED</div>
<div class="t" style="left:1437.05px;top:575.43px;font-size:15.2px;line-height:15.2px;color:#313131;font-weight:400;letter-spacing:-0.350px;transform:scaleX(0.9539);transform-origin:0 0;">HUSSIEN</div>
<div class="t" style="left:1643.00px;top:562.43px;font-size:15.2px;line-height:15.2px;color:#313131;font-weight:400;letter-spacing:0.000px;">20/07/2025</div>
<div style="left:39px;top:611px;width:1799px;height:82px;background:#f1f1f1"></div>
<div style="left:561px;top:611px;width:1px;height:83px;background:#d9d9d9"></div>
<div style="left:699px;top:611px;width:1px;height:83px;background:#d9d9d9"></div>
<div style="left:836px;top:611px;width:1px;height:83px;background:#d9d9d9"></div>
<div style="left:1056px;top:611px;width:1px;height:83px;background:#d9d9d9"></div>
<div style="left:1262px;top:611px;width:1px;height:83px;background:#d9d9d9"></div>
<div style="left:1427px;top:611px;width:1px;height:83px;background:#d9d9d9"></div>
<div style="left:1633px;top:611px;width:1px;height:83px;background:#d9d9d9"></div>
<div style="left:51px;top:617px;width:98px;height:35px;background:linear-gradient(#f8f8f8,#e6e6e6);border:1px solid #c5c5c5;border-radius:4px;box-sizing:border-box"></div>
<svg style="position:absolute;left:74px;top:624px" width="18" height="18" viewBox="0 0 18 18"><g transform="translate(1.3,16.8) rotate(-41.5)"><path d="M0 0 L4.5 -2.7 V2.7Z" fill="#6b6b6b"/><rect x="5" y="-2.7" width="14" height="5.4" fill="#6b6b6b"/><rect x="19.6" y="-2.7" width="3.4" height="5.4" rx="1" fill="#6b6b6b"/><path d="M5 0 H19" stroke="#cfcfcf" stroke-width="0.7"/><path d="M1.2 0 L3 -1 V1Z" fill="#eee"/></g></svg>
<div class="t" style="left:98.00px;top:627.18px;font-size:15.5px;line-height:15.5px;color:#313131;font-weight:400;letter-spacing:-0.100px;">Edit</div>
<div style="left:154px;top:617px;width:98px;height:35px;background:linear-gradient(#f8f8f8,#e6e6e6);border:1px solid #c5c5c5;border-radius:4px;box-sizing:border-box"></div>
<svg style="position:absolute;left:170px;top:624px" width="16" height="18" viewBox="0 0 16 18"><path d="M0.3 4 H15.7" stroke="#6b6b6b" stroke-width="1.4"/><path d="M4.8 3.6 V2.2 Q4.8 1.2 5.8 1.2 H10.2 Q11.2 1.2 11.2 2.2 V3.6" fill="none" stroke="#6b6b6b" stroke-width="1.3"/><path d="M2 4.5 V16.2 Q2 17.3 3.1 17.3 H12.9 Q14 17.3 14 16.2 V4.5" fill="none" stroke="#6b6b6b" stroke-width="1.3"/><path d="M5.6 7 V14.5 M8 7 V14.5 M10.4 7 V14.5" stroke="#6b6b6b" stroke-width="1.2"/></svg>
<div class="t" style="left:192.00px;top:627.18px;font-size:15.5px;line-height:15.5px;color:#313131;font-weight:400;letter-spacing:-0.200px;">Delete</div>
<div style="left:257px;top:617px;width:109px;height:35px;background:linear-gradient(#f8f8f8,#e6e6e6);border:1px solid #c5c5c5;border-radius:4px;box-sizing:border-box"></div>
<svg style="position:absolute;left:266px;top:622px" width="20" height="21" viewBox="0 0 20 21"><g fill="none" stroke="#6b6b6b" stroke-width="1.9"><rect x="3.2" y="4.2" width="5.6" height="9.2" rx="2.4" transform="rotate(-45 6 8.8)"/><rect x="11.4" y="11.6" width="5.6" height="9.2" rx="2.4" transform="rotate(-45 14.2 16.2)"/></g></svg>
<div class="t" style="left:291.05px;top:627.18px;font-size:15.5px;line-height:15.5px;color:#313131;font-weight:400;letter-spacing:-0.350px;transform:scaleX(0.9524);transform-origin:0 0;">Sales Rep</div>
<div style="left:372px;top:617px;width:120px;height:35px;background:linear-gradient(#f8f8f8,#e6e6e6);border:1px solid #c5c5c5;border-radius:4px;box-sizing:border-box"></div>
<svg style="position:absolute;left:380px;top:624px" width="18" height="19" viewBox="0 0 18 19"><g transform="translate(9.2,9.2) rotate(-45)"><path d="M1.3 -5 V6 A1.5 1.5 0 0 1 -1.7 6 V-8 A2.7 2.7 0 0 1 3.7 -8 V8.3 A3.7 3.7 0 0 1 -3.7 8.3 V-2.5" fill="none" stroke="#6b6b6b" stroke-width="1.35" stroke-linecap="round"/></g></svg>
<div class="t" style="left:403.60px;top:627.18px;font-size:15.5px;line-height:15.5px;color:#313131;font-weight:400;letter-spacing:0.067px;">Attachment</div>
<div style="left:51px;top:652px;width:107px;height:35px;background:linear-gradient(#f8f8f8,#e6e6e6);border:1px solid #c5c5c5;border-radius:4px;box-sizing:border-box"></div>
<svg style="position:absolute;left:61px;top:657px" width="22" height="22" viewBox="0 0 22 22"><g fill="#6b6b6b"><circle cx="10.7" cy="6.5" r="4"/><path d="M4.5 21 V15.5 Q4.5 11 10.7 11 Q17 11 17 15.5 V21Z"/><circle cx="3.8" cy="3.2" r="2.6"/><circle cx="17.6" cy="3.2" r="2.6"/><path d="M0 11.5 V8.5 Q0 6.3 3.8 6.3 Q5.8 6.3 6.8 7.6 Q6 9.5 7 11 Q4 12 3.6 15 H0Z"/><path d="M21.4 11.5 V8.5 Q21.4 6.3 17.6 6.3 Q15.6 6.3 14.6 7.6 Q15.4 9.5 14.4 11 Q17.4 12 17.8 15 H21.4Z"/></g></svg>
<div class="t" style="left:88.50px;top:662.18px;font-size:15.5px;line-height:15.5px;color:#313131;font-weight:400;letter-spacing:-0.143px;">Contacts</div>
<div class="t" style="left:571.52px;top:645.43px;font-size:15.2px;line-height:15.2px;color:#313131;font-weight:400;letter-spacing:-0.350px;transform:scaleX(0.9833);transform-origin:0 0;">K233</div>
<div class="t" style="left:710.67px;top:645.63px;font-size:13.2px;line-height:13.2px;color:#3f8cc0;font-weight:400;letter-spacing:0.000px;">شركة يمن تاور</div>
<div class="t" style="left:848.35px;top:645.81px;font-size:12.98px;line-height:12.98px;color:#313131;font-weight:400;letter-spacing:0.000px;">شركة يمن تاور</div>
<div class="t" style="left:1065.80px;top:645.43px;font-size:15.2px;line-height:15.2px;color:#313131;font-weight:400;letter-spacing:0.094px;">hussein@gmail.com</div>
<div class="t" style="left:1272.00px;top:645.43px;font-size:15.2px;line-height:15.2px;color:#313131;font-weight:400;letter-spacing:-0.333px;">1234</div>
<div class="t" style="left:1643.00px;top:645.43px;font-size:15.2px;line-height:15.2px;color:#313131;font-weight:400;letter-spacing:0.000px;">07/07/2025</div>
<div style="left:561px;top:694px;width:1px;height:82px;background:#d9d9d9"></div>
<div style="left:699px;top:694px;width:1px;height:82px;background:#d9d9d9"></div>
<div style="left:836px;top:694px;width:1px;height:82px;background:#d9d9d9"></div>
<div style="left:1056px;top:694px;width:1px;height:82px;background:#d9d9d9"></div>
<div style="left:1262px;top:694px;width:1px;height:82px;background:#d9d9d9"></div>
<div style="left:1427px;top:694px;width:1px;height:82px;background:#d9d9d9"></div>
<div style="left:1633px;top:694px;width:1px;height:82px;background:#d9d9d9"></div>
<div style="left:51px;top:700px;width:98px;height:35px;background:linear-gradient(#f8f8f8,#e6e6e6);border:1px solid #c5c5c5;border-radius:4px;box-sizing:border-box"></div>
<svg style="position:absolute;left:74px;top:707px" width="18" height="18" viewBox="0 0 18 18"><g transform="translate(1.3,16.8) rotate(-41.5)"><path d="M0 0 L4.5 -2.7 V2.7Z" fill="#6b6b6b"/><rect x="5" y="-2.7" width="14" height="5.4" fill="#6b6b6b"/><rect x="19.6" y="-2.7" width="3.4" height="5.4" rx="1" fill="#6b6b6b"/><path d="M5 0 H19" stroke="#cfcfcf" stroke-width="0.7"/><path d="M1.2 0 L3 -1 V1Z" fill="#eee"/></g></svg>
<div class="t" style="left:98.00px;top:710.18px;font-size:15.5px;line-height:15.5px;color:#313131;font-weight:400;letter-spacing:-0.100px;">Edit</div>
<div style="left:154px;top:700px;width:98px;height:35px;background:linear-gradient(#f8f8f8,#e6e6e6);border:1px solid #c5c5c5;border-radius:4px;box-sizing:border-box"></div>
<svg style="position:absolute;left:170px;top:707px" width="16" height="18" viewBox="0 0 16 18"><path d="M0.3 4 H15.7" stroke="#6b6b6b" stroke-width="1.4"/><path d="M4.8 3.6 V2.2 Q4.8 1.2 5.8 1.2 H10.2 Q11.2 1.2 11.2 2.2 V3.6" fill="none" stroke="#6b6b6b" stroke-width="1.3"/><path d="M2 4.5 V16.2 Q2 17.3 3.1 17.3 H12.9 Q14 17.3 14 16.2 V4.5" fill="none" stroke="#6b6b6b" stroke-width="1.3"/><path d="M5.6 7 V14.5 M8 7 V14.5 M10.4 7 V14.5" stroke="#6b6b6b" stroke-width="1.2"/></svg>
<div class="t" style="left:192.00px;top:710.18px;font-size:15.5px;line-height:15.5px;color:#313131;font-weight:400;letter-spacing:-0.200px;">Delete</div>
<div style="left:257px;top:700px;width:109px;height:35px;background:linear-gradient(#f8f8f8,#e6e6e6);border:1px solid #c5c5c5;border-radius:4px;box-sizing:border-box"></div>
<svg style="position:absolute;left:266px;top:705px" width="20" height="21" viewBox="0 0 20 21"><g fill="none" stroke="#6b6b6b" stroke-width="1.9"><rect x="3.2" y="4.2" width="5.6" height="9.2" rx="2.4" transform="rotate(-45 6 8.8)"/><rect x="11.4" y="11.6" width="5.6" height="9.2" rx="2.4" transform="rotate(-45 14.2 16.2)"/></g></svg>
<div class="t" style="left:291.05px;top:710.18px;font-size:15.5px;line-height:15.5px;color:#313131;font-weight:400;letter-spacing:-0.350px;transform:scaleX(0.9524);transform-origin:0 0;">Sales Rep</div>
<div style="left:372px;top:700px;width:120px;height:35px;background:linear-gradient(#f8f8f8,#e6e6e6);border:1px solid #c5c5c5;border-radius:4px;box-sizing:border-box"></div>
<svg style="position:absolute;left:380px;top:707px" width="18" height="19" viewBox="0 0 18 19"><g transform="translate(9.2,9.2) rotate(-45)"><path d="M1.3 -5 V6 A1.5 1.5 0 0 1 -1.7 6 V-8 A2.7 2.7 0 0 1 3.7 -8 V8.3 A3.7 3.7 0 0 1 -3.7 8.3 V-2.5" fill="none" stroke="#6b6b6b" stroke-width="1.35" stroke-linecap="round"/></g></svg>
<div class="t" style="left:403.60px;top:710.18px;font-size:15.5px;line-height:15.5px;color:#313131;font-weight:400;letter-spacing:0.067px;">Attachment</div>
<div style="left:51px;top:735px;width:107px;height:35px;background:linear-gradient(#f8f8f8,#e6e6e6);border:1px solid #c5c5c5;border-radius:4px;box-sizing:border-box"></div>
<svg style="position:absolute;left:61px;top:740px" width="22" height="22" viewBox="0 0 22 22"><g fill="#6b6b6b"><circle cx="10.7" cy="6.5" r="4"/><path d="M4.5 21 V15.5 Q4.5 11 10.7 11 Q17 11 17 15.5 V21Z"/><circle cx="3.8" cy="3.2" r="2.6"/><circle cx="17.6" cy="3.2" r="2.6"/><path d="M0 11.5 V8.5 Q0 6.3 3.8 6.3 Q5.8 6.3 6.8 7.6 Q6 9.5 7 11 Q4 12 3.6 15 H0Z"/><path d="M21.4 11.5 V8.5 Q21.4 6.3 17.6 6.3 Q15.6 6.3 14.6 7.6 Q15.4 9.5 14.4 11 Q17.4 12 17.8 15 H21.4Z"/></g></svg>
<div class="t" style="left:88.50px;top:745.18px;font-size:15.5px;line-height:15.5px;color:#313131;font-weight:400;letter-spacing:-0.143px;">Contacts</div>
<div class="t" style="left:571.52px;top:728.43px;font-size:15.2px;line-height:15.2px;color:#313131;font-weight:400;letter-spacing:-0.350px;transform:scaleX(0.9833);transform-origin:0 0;">K232</div>
<div class="t" style="left:709.00px;top:729.51px;font-size:12.16px;line-height:12.16px;color:#3f8cc0;font-weight:400;letter-spacing:0.000px;">محمد عبدالعليم</div>
<div class="t" style="left:846.50px;top:728.43px;font-size:15.2px;line-height:15.2px;color:#313131;font-weight:400;letter-spacing:0.150px;">Mohamed Abdelalim</div>
<div class="t" style="left:1066.80px;top:728.43px;font-size:15.2px;line-height:15.2px;color:#313131;font-weight:400;letter-spacing:-0.350px;transform:scaleX(0.9789);transform-origin:0 0;">A@B.com1</div>
<div class="t" style="left:1272.00px;top:728.43px;font-size:15.2px;line-height:15.2px;color:#313131;font-weight:400;letter-spacing:-0.333px;">1234</div>
<div class="t" style="left:1643.00px;top:728.43px;font-size:15.2px;line-height:15.2px;color:#313131;font-weight:400;letter-spacing:0.000px;">02/07/2025</div>
<div style="left:1839px;top:362px;width:19px;height:414px;background:#fafafa"></div>
<svg style="position:absolute;left:1841px;top:369px" width="15" height="9" viewBox="0 0 15 9"><path d="M1 8 L7.5 1 L14 8Z" fill="#a3a3a3"/></svg>
<svg style="position:absolute;left:1841px;top:760px" width="15" height="9" viewBox="0 0 15 9"><path d="M1 1 L7.5 8 L14 1Z" fill="#8e8e8e"/></svg>
<div style="left:39px;top:776px;width:1819px;height:50px;background:linear-gradient(#f6f6f6,#e9e7e7);border-top:1px solid #c5c5c5"></div>
<div style="left:45px;top:783px;width:35px;height:35px;border:1px solid #cfcfcf;border-radius:50%;box-sizing:border-box"></div>
<div style="left:83px;top:783px;width:35px;height:35px;border:1px solid #cfcfcf;border-radius:50%;box-sizing:border-box"></div>
<div style="left:122px;top:783px;width:36px;height:36px;background:#d3d2d2;border:1px solid #b8b8b8;border-radius:50%;box-sizing:border-box"></div>
<div style="left:342px;top:783px;width:35px;height:35px;border:1px solid #cfcfcf;border-radius:50%;box-sizing:border-box"></div>
<div style="left:380px;top:783px;width:35px;height:35px;border:1px solid #cfcfcf;border-radius:50%;box-sizing:border-box"></div>
<svg style="position:absolute;left:56px;top:788px" width="14" height="12" viewBox="0 0 14 12"><rect x="1" y="1.5" width="1.8" height="9" fill="#6e6764"/><path d="M10.5 1.5 V10.5 L3.5 6Z" fill="#6e6764"/></svg>
<svg style="position:absolute;left:95px;top:788px" width="12" height="12" viewBox="0 0 12 12"><path d="M9 1.5 V10.5 L2 6Z" fill="#6e6764"/></svg>
<svg style="position:absolute;left:354px;top:788px" width="12" height="12" viewBox="0 0 12 12"><path d="M3 1.5 V10.5 L10 6Z" fill="#6e6764"/></svg>
<svg style="position:absolute;left:390px;top:788px" width="14" height="12" viewBox="0 0 14 12"><path d="M2.5 1.5 V10.5 L9.5 6Z" fill="#6e6764"/><rect x="10.2" y="1.5" width="1.8" height="9" fill="#6e6764"/></svg>
<div class="t" style="left:134.00px;top:794.38px;font-size:15.5px;line-height:15.5px;color:#313131;font-weight:400;letter-spacing:0.000px;">1</div>
<div class="t" style="left:170.00px;top:794.38px;font-size:15.5px;line-height:15.5px;color:#313131;font-weight:400;letter-spacing:0.000px;">2</div>
<div class="t" style="left:206.50px;top:794.38px;font-size:15.5px;line-height:15.5px;color:#313131;font-weight:400;letter-spacing:0.000px;">3</div>
<div class="t" style="left:243.60px;top:794.38px;font-size:15.5px;line-height:15.5px;color:#313131;font-weight:400;letter-spacing:0.000px;">4</div>
<div class="t" style="left:279.00px;top:794.38px;font-size:15.5px;line-height:15.5px;color:#313131;font-weight:400;letter-spacing:0.000px;">5</div>
<div class="t" style="left:313.00px;top:794.38px;font-size:15.5px;line-height:15.5px;color:#313131;font-weight:400;letter-spacing:0.500px;">...</div>
<div style="left:448px;top:782px;width:79px;height:40px;background:linear-gradient(#f8f8f8,#e6e6e6);border:1px solid #c5c5c5;border-radius:4px;box-sizing:border-box"></div>
<div class="t" style="left:454.50px;top:794.18px;font-size:15.5px;line-height:15.5px;color:#313131;font-weight:400;letter-spacing:0.000px;">5</div>
<svg style="position:absolute;left:504px;top:798px" width="11" height="8" viewBox="0 0 11 8"><path d="M0.5 0.5 H10 L5.25 7.5Z" fill="#5b5350"/></svg>
<div class="t" style="left:533.50px;top:793.33px;font-size:16.5px;line-height:16.5px;color:#313131;font-weight:400;letter-spacing:-0.154px;">items per page</div>
<div style="left:669px;top:790px;width:37px;height:27px;background:linear-gradient(#f8f8f8,#e6e6e6);border:1px solid #c5c5c5;border-radius:3px;box-sizing:border-box"></div>
<svg style="position:absolute;left:678px;top:793px" width="20" height="20" viewBox="0 0 20 20"><circle cx="9.6" cy="10.3" r="7.6" fill="none" stroke="#1e1e1e" stroke-width="2.2"/><path d="M5 15 L14.6 5.3" stroke="#1e1e1e" stroke-width="2.2"/></svg>
<div class="t" style="left:1643.50px;top:791.53px;font-size:16.5px;line-height:16.5px;color:#313131;font-weight:400;letter-spacing:-0.332px;">1 - 5 From 141 items</div>
<svg style="position:absolute;left:1823px;top:783px" width="18" height="18" viewBox="0 0 18 18"><path d="M8.9 4.4 A5.9 5.9 0 1 0 12.7 5.8" fill="none" stroke="#5b5350" stroke-width="1.6"/><path d="M7.7 1.6 L12.7 4.4 L8.2 7.5Z" fill="#5b5350"/></svg>
</body></html>
